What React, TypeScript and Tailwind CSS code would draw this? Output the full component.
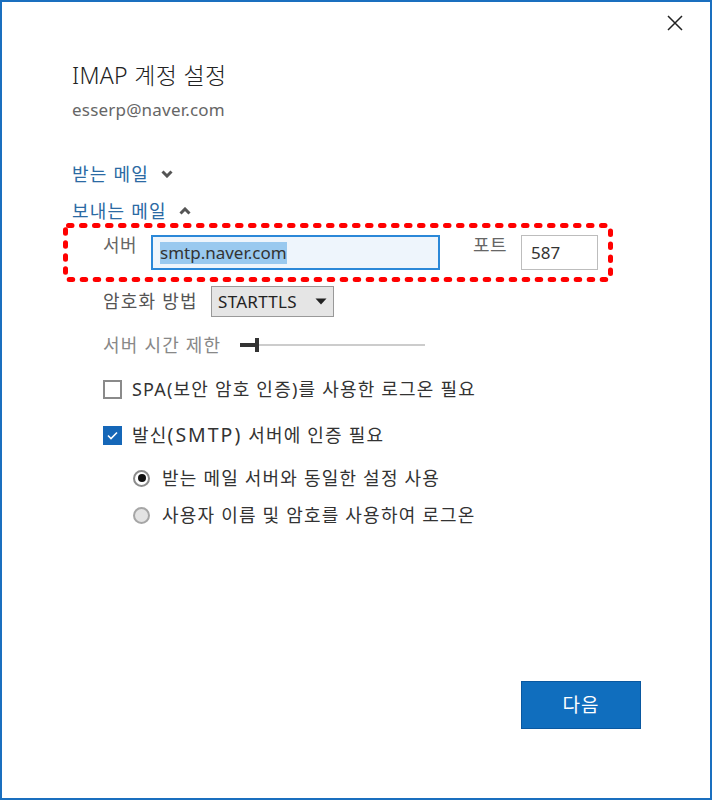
import React from "react";

const ff = { fontFamily: '"Segoe UI", "Noto Sans", "Noto Sans CJK KR", sans-serif' };

function Chevron({ up }: { up?: boolean }) {
  return (
    <svg width="12" height="8" viewBox="0 0 12 8" className="ml-[12px]">
      <path
        d={up ? "M1.5 6.5 L6 2 L10.5 6.5" : "M1.5 1.5 L6 6 L10.5 1.5"}
        fill="none"
        stroke="#555"
        strokeWidth="3"
      />
    </svg>
  );
}

export default function App() {
  return (
    <div
      className="relative w-[712px] h-[800px] bg-white border-2 border-[#1a6fbf] flex flex-col text-[#333]"
      style={ff}
    >
      {/* close */}
      <div className="flex justify-end pt-[12px] pr-[26px]">
        <svg width="18" height="18" viewBox="0 0 18 18">
          <path d="M2 2 L16 16 M16 2 L2 16" stroke="#222" strokeWidth="1.5" fill="none" />
        </svg>
      </div>

      <div className="pl-[70px] flex flex-col">
        <div className="mt-[28px] h-[30px] flex items-center text-[23px] font-light text-[#222] leading-none tracking-[0.3px]">
          IMAP 계정 설정
        </div>
        <div className="mt-[8px] h-[24px] flex items-center text-[17px] text-[#666] tracking-[0.2px]">
          esserp@naver.com
        </div>
        <div className="mt-[40px] h-[24px] flex items-center text-[18px] tracking-[1.2px] text-[#2b6aa3]">
          받는 메일
          <Chevron />
        </div>
        <div className="mt-[13px] h-[24px] flex items-center text-[18px] tracking-[1.2px] text-[#2b6aa3]">
          보내는 메일
          <Chevron up />
        </div>
      </div>

      {/* highlighted server row */}
      <div className="relative ml-[61px] mt-[0px] w-[550px] h-[59px] flex items-center pl-[40px]">
        <svg className="absolute inset-0" width="550" height="59" viewBox="0 0 550 59">
          <rect
            x="2.5"
            y="2.5"
            width="545"
            height="54"
            rx="3"
            fill="none"
            stroke="#ff0000"
            strokeWidth="5"
            strokeDasharray="3.5 9.5"
            strokeLinecap="round"
          />
        </svg>
        <div className="w-[48px] text-[18px] tracking-[0.5px] text-[#666] -mt-[14px]">서버</div>
        <div className="w-[289px] h-[35px] border-2 border-[#2b88d8] bg-[#eef5fc] flex items-center pl-[7px]">
          <span className="bg-[#99c9ef] text-[17px] text-[#333] leading-[22px]">smtp.naver.com</span>
        </div>
        <div className="ml-[33px] w-[48px] text-[18px] tracking-[0.5px] text-[#666] -mt-[14px]">포트</div>
        <div className="w-[77px] h-[35px] border border-[#bdbdbd] flex items-center pl-[9px] text-[17px] text-[#333]">
          587
        </div>
      </div>

      <div className="pl-[101px] flex flex-col">
        <div className="mt-[4px] h-[31px] flex items-center">
          <span className="w-[108px] text-[18px] tracking-[1.2px] text-[#555]">암호화 방법</span>
          <div className="w-[123px] h-[31px] border border-[#999] bg-[#e5e5e5] flex items-center pl-[6px] pr-[6px] justify-between">
            <span className="text-[17px] text-[#222] tracking-[0.3px]">STARTTLS</span>
            <svg width="12" height="7" viewBox="0 0 12 7">
              <path d="M0.5 0.5 L11.5 0.5 L6 6.5 Z" fill="#222" />
            </svg>
          </div>
        </div>

        <div className="mt-[14px] h-[28px] flex items-center">
          <span className="w-[137px] text-[18px] tracking-[1.2px] text-[#888]">서버 시간 제한</span>
          <div className="relative w-[185px] h-[14px] flex items-center">
            <div className="w-[15px] h-[4px] bg-[#333]" />
            <div className="w-[4px] h-[14px] bg-[#333]" />
            <div className="flex-1 h-[2px] bg-[#cccccc]" />
          </div>
        </div>

        <div className="mt-[16px] h-[28px] flex items-center">
          <div className="w-[19px] h-[19px] border-2 border-[#8a8a8a] bg-white" />
          <span className="ml-[10px] text-[18px] tracking-[1.2px] text-[#333]">SPA(보안 암호 인증)를 사용한 로그온 필요</span>
        </div>

        <div className="mt-[18px] h-[28px] flex items-center">
          <div className="w-[19px] h-[19px] bg-[#1567b8] flex items-center justify-center">
            <svg width="11" height="9" viewBox="0 0 11 9">
              <path d="M1 4.5 L4 7.5 L10 1.5" fill="none" stroke="#fff" strokeWidth="1.6" />
            </svg>
          </div>
          <span className="ml-[10px] text-[18px] tracking-[1.2px] text-[#333]">
            발신<span className="text-[19.5px] tracking-[2px]">(SMTP)</span> 서버에 인증 필요
          </span>
        </div>

        <div className="pl-[30px] flex flex-col">
          <div className="mt-[15px] h-[28px] flex items-center">
            <div className="w-[17px] h-[17px] rounded-full border-[2px] border-[#8c8c8c] bg-white flex items-center justify-center">
              <div className="w-[8px] h-[8px] rounded-full bg-[#111]" />
            </div>
            <span className="ml-[12px] text-[18px] tracking-[1.2px] text-[#333]">받는 메일 서버와 동일한 설정 사용</span>
          </div>
          <div className="mt-[9px] h-[28px] flex items-center">
            <div className="w-[17px] h-[17px] rounded-full border-[2px] border-[#a6a6a6] bg-[#e3e3e3]" />
            <span className="ml-[12px] text-[18px] tracking-[1.2px] text-[#333]">사용자 이름 및 암호를 사용하여 로그온</span>
          </div>
        </div>
      </div>

      <div className="flex-1" />
      <div className="flex justify-end pr-[69px] pb-[69px]">
        <button className="w-[120px] h-[48px] bg-[#106ebe] border border-[#0a58a0] text-white text-[19px] tracking-[1px]">
          다음
        </button>
      </div>
    </div>
  );
}
